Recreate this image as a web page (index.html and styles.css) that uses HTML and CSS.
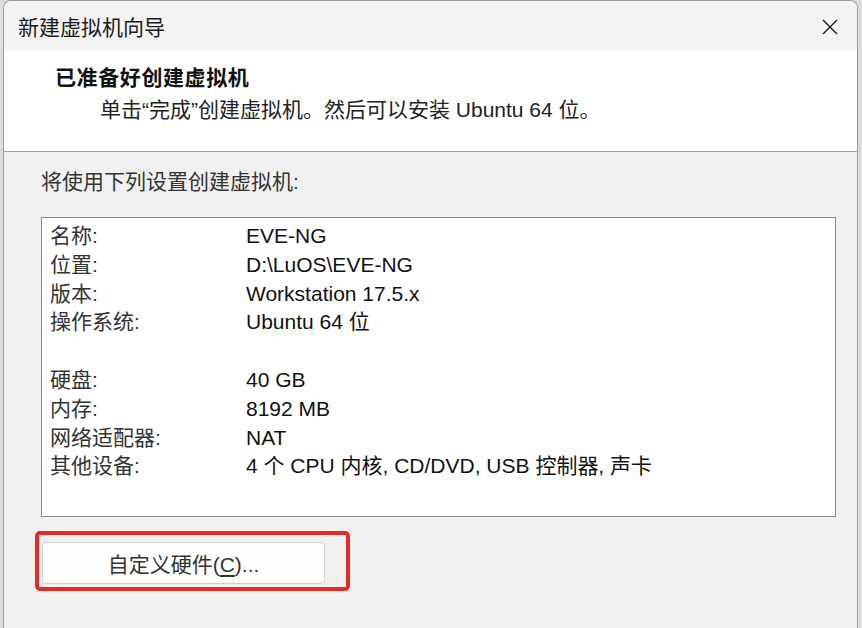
FILE: index.html
```html
<!DOCTYPE html>
<html>

<head>
  <meta charset="utf-8">
  <meta name="viewport" content="width=device-width">
  <title>新建虚拟机向导</title>
  <link rel="stylesheet" href="styles.css">
</head>

<body>

  <div class="window">
    <div class="titlebar">
      <span class="title">新建虚拟机向导</span>
      <svg class="close" width="16" height="16" viewBox="0 0 16 16">
        <path d="M1 1 L15 15 M15 1 L1 15" stroke="#1a1a1a" stroke-width="1.4" fill="none" />
      </svg>
    </div>

    <div class="header">
      <div class="header-title">已准备好创建虚拟机</div>
      <div class="header-sub">单击“完成”创建虚拟机。然后可以安装 Ubuntu 64 位。</div>
    </div>

    <div class="content">
      <div class="intro">将使用下列设置创建虚拟机:</div>

      <div class="summary">
        <div class="row"><span class="key">名称:</span><span class="val">EVE-NG</span></div>
        <div class="row"><span class="key">位置:</span><span class="val">D:\LuOS\EVE-NG</span></div>
        <div class="row"><span class="key">版本:</span><span class="val">Workstation 17.5.x</span></div>
        <div class="row"><span class="key">操作系统:</span><span class="val">Ubuntu 64 位</span></div>
        <div class="row"></div>
        <div class="row"><span class="key">硬盘:</span><span class="val">40 GB</span></div>
        <div class="row"><span class="key">内存:</span><span class="val">8192 MB</span></div>
        <div class="row"><span class="key">网络适配器:</span><span class="val">NAT</span></div>
        <div class="row"><span class="key">其他设备:</span><span class="val">4 个 CPU 内核, CD/DVD, USB 控制器, 声卡</span></div>
      </div>

      <div class="actions">
        <button class="btn">自定义硬件(<u>C</u>)...</button>
        <div class="mark"></div>
      </div>
    </div>
  </div>

</body>

</html>
```

FILE: styles.css
```css
body {
  margin: 0;
  height: 628px;
  background: #dcdcdc;
  font-family: 'Liberation Sans', 'Noto Sans CJK SC', sans-serif;
  color: #111;
  overflow: hidden;
}

.window {
  margin-left: 3px;
  width: 853px;
  height: 627px;
  border: 1px solid #9c9c9c;
  border-bottom: none;
  border-radius: 8px 8px 0 0;
  background: #f0f0f0;
  overflow: hidden;
}

.titlebar {
  height: 50px;
  background: #f3f3f3;
  display: flex;
  align-items: center;
  justify-content: space-between;
  padding: 0 19px 0 14px;
}

.title {
  font-size: 21px;
  color: #1a1a1a;
}

.close {
  margin-top: 1px;
}

.header {
  height: 101px;
  background: #ffffff;
  border-bottom: 1px solid #a3a3a3;
  box-sizing: border-box;
  padding-top: 15px;
}

.header-title {
  margin-left: 51px;
  font-size: 21px;
  font-weight: bold;
  letter-spacing: 0.6px;
  line-height: 24px;
}

.header-sub {
  margin-left: 96px;
  margin-top: 8px;
  font-size: 21px;
  line-height: 24px;
  color: #222;
}

.content {
  padding: 18px 0 0 37px;
}

.intro {
  font-size: 21px;
  line-height: 24px;
  color: #333;
}

.summary {
  margin-top: 23px;
  width: 793px;
  height: 294px;
  background: #ffffff;
  border: 1px solid #8a8a8a;
  padding-top: 4px;
  box-sizing: content-box;
}

.row {
  display: flex;
  height: 28.8px;
  line-height: 28.8px;
  font-size: 21px;
}

.key {
  width: 196px;
  padding-left: 8px;
  color: #333;
}

.val {
  color: #111;
}

.actions {
  position: relative;
  margin-top: 25px;
  margin-left: 1px;
}

.btn {
  width: 283px;
  height: 42px;
  background: #fdfdfd;
  border: 1px solid #cfcfcf;
  border-radius: 4px;
  font-family: inherit;
  font-size: 21px;
  color: #333;
  padding: 0;
}

.btn u {
  text-underline-offset: 3px;
}

.mark {
  position: absolute;
  left: -7px;
  top: -11px;
  width: 307px;
  height: 52px;
  border: 4px solid #e42a25;
  border-radius: 5px;
}
```
